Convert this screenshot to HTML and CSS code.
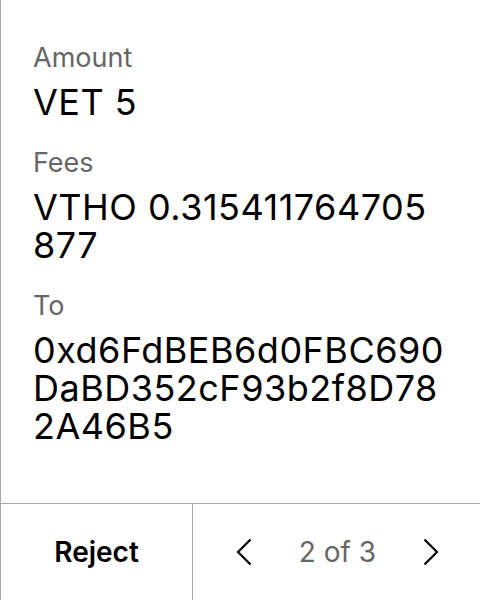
FILE: index.html
```html
<!DOCTYPE html>
<html lang="en">
<head>
<meta charset="utf-8">
<title>Transaction</title>
<link rel="stylesheet" href="styles.css">
</head>
<body>
<div class="screen">
  <div class="details">
    <div class="field">
      <div class="label">Amount</div>
      <div class="value">VET 5</div>
    </div>
    <div class="field">
      <div class="label">Fees</div>
      <div class="value">VTHO 0.315411764705877</div>
    </div>
    <div class="field">
      <div class="label">To</div>
      <div class="value">0xd6FdBEB6d0FBC690DaBD352cF93b2f8D782A46B5</div>
    </div>
  </div>
  <div class="footer">
    <div class="reject">Reject</div>
    <div class="pager">
      <svg class="chev" viewBox="0 0 17 28" width="17" height="28"><path d="M15.5 1.5 L3 14 L15.5 26.5" fill="none" stroke="#000" stroke-width="2.2"/></svg>
      <span class="count">2 of 3</span>
      <svg class="chev" viewBox="0 0 17 28" width="17" height="28"><path d="M1.5 1.5 L14 14 L1.5 26.5" fill="none" stroke="#000" stroke-width="2.2"/></svg>
    </div>
  </div>
</div>
</body>
</html>
```

FILE: styles.css
```css
html, body {
  margin: 0;
  padding: 0;
  background: #fff;
}
body {
  font-family: Inter, "Noto Sans", sans-serif;
  color: #000;
}
.screen {
  width: 480px;
  height: 600px;
  box-sizing: border-box;
  border-left: 1px solid #a8a8a8;
  display: flex;
  flex-direction: column;
}
.details {
  flex: 1;
  padding: 42px 34px 0 32px;
  display: flex;
  flex-direction: column;
  gap: 26px;
}
.label {
  font-size: 27px;
  line-height: 32px;
  color: #666;
}
.value {
  font-size: 36px;
  line-height: 38px;
  margin-top: 9px;
  letter-spacing: 0.5px;
  word-break: break-all;
}
.footer {
  height: 96px;
  border-top: 1px solid #a8a8a8;
  display: flex;
}
.reject {
  width: 191px;
  border-right: 1px solid #a8a8a8;
  display: flex;
  align-items: center;
  justify-content: center;
  font-size: 28px;
  font-weight: 600;
}
.pager {
  flex: 1;
  display: flex;
  align-items: center;
  justify-content: space-between;
  padding: 0 40px 0 42px;
}
.count {
  font-size: 28px;
  color: #666;
}
.chev {
  display: block;
}
```
